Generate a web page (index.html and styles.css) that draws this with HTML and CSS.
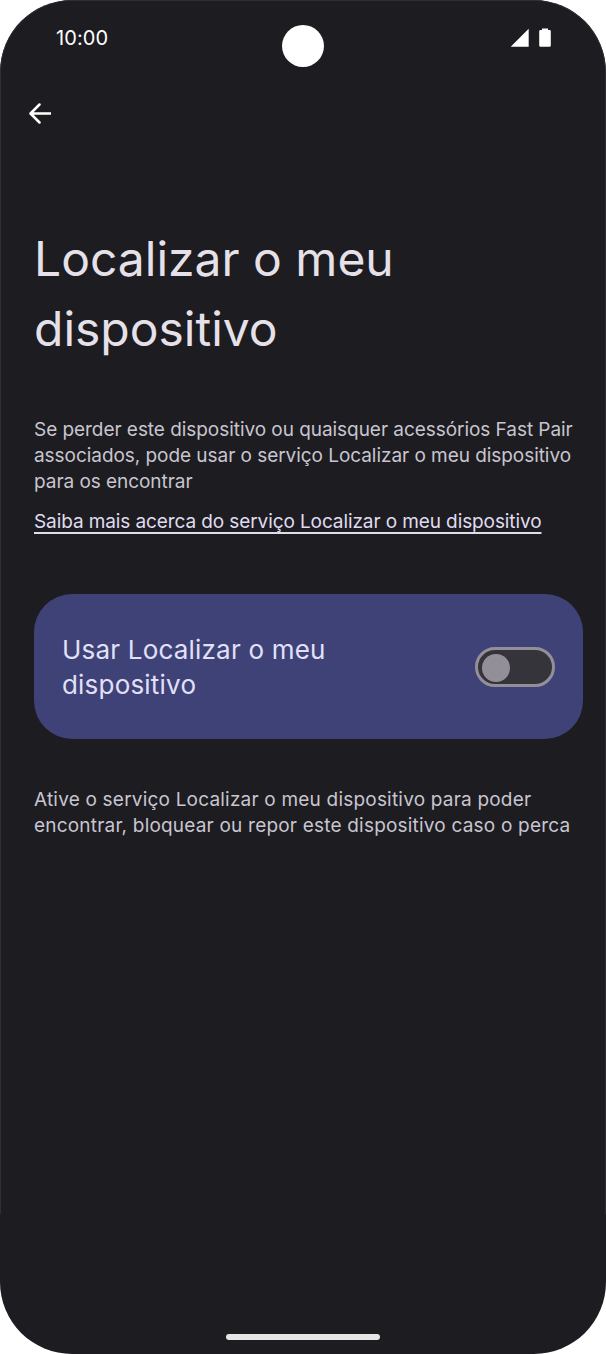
FILE: index.html
```html
<!DOCTYPE html>
<html lang="pt">
<head>
    <meta charset="UTF-8">
    <meta name="viewport" content="width=device-width, initial-scale=1.0">
    <title>Localizar o meu dispositivo</title>
    <link rel="stylesheet" href="styles.css">
</head>
<body>
    <div class="phone">
        <div class="edge"></div>
        <div class="camera"></div>

        <!-- barra de estado -->
        <div class="status-bar">
            <span class="clock">10:00</span>
            <div class="status-icons">
                <svg class="signal" width="19" height="19" viewBox="0 0 19 19">
                    <path d="M18.700 0.700V18.700H0.700Z" fill="#ffffff"/>
                </svg>
                <svg class="battery" width="12" height="19" viewBox="0 0 12 19">
                    <path d="M3 0.500H9V2H10.500Q11.800 2 11.800 3.300V17.400Q11.800 18.700 10.500 18.700H1.500Q0.200 18.700 0.200 17.400V3.300Q0.200 2 1.500 2H3Z" fill="#ffffff"/>
                </svg>
            </div>
        </div>

        <button class="back" type="button">
            <svg width="24" height="24" viewBox="0 0 24 24">
                <path d="M23.500 11.500H4M12.500 2.500L3.500 11.500L12.500 20.500" fill="none" stroke="#ffffff" stroke-width="2.500" stroke-linecap="round" stroke-linejoin="round"/>
            </svg>
        </button>

        <h1 class="title">Localizar o meu dispositivo</h1>

        <p class="text">Se perder este dispositivo ou quaisquer acessórios Fast Pair associados, pode usar o serviço Localizar o meu dispositivo para os encontrar</p>
        <a class="link" href="#">Saiba mais acerca do serviço Localizar o meu dispositivo</a>

        <!-- cartao principal -->
        <div class="main-switch">
            <span class="main-switch-label">Usar Localizar o meu dispositivo</span>
            <div class="toggle"><div class="toggle-thumb"></div></div>
        </div>

        <p class="text text-footer">Ative o serviço Localizar o meu dispositivo para poder encontrar, bloquear ou repor este dispositivo caso o perca</p>

        <div class="home-bar"></div>
    </div>
</body>
</html>
```

FILE: styles.css
```css
* {
    box-sizing: border-box;
}

body {
    margin: 0;
    background-color: white;
    font-family: Inter, "Noto Sans", sans-serif;
}

.phone {
    position: relative;
    display: flex;
    flex-direction: column;
    width: 606px;
    height: 1354px;
    padding: 0 23px 0 34px;
    background-color: #1c1c21;
    border-radius: 72px;
    overflow: hidden;
}

/* linha clara na borda do aparelho, para antes do fundo */
.edge {
    position: absolute;
    top: 0;
    left: 0;
    right: 0;
    height: 1214px;
    border: 1px solid #2f2f34;
    border-bottom: none;
    border-radius: 72px 72px 0 0;
}

.camera {
    position: absolute;
    top: 25px;
    left: 282px;
    width: 42px;
    height: 42px;
    background-color: white;
    border-radius: 50%;
}

.status-bar {
    display: flex;
    justify-content: space-between;
    align-items: center;
    height: 38px;
    margin-top: 18px;
    padding: 0 32px 0 22px;
}

.clock {
    margin-top: 1px;
    color: white;
    font-size: 20px;
    letter-spacing: 0.1px;
}

.status-icons {
    display: flex;
    align-items: center;
    gap: 10px;
}

.back {
    display: block;
    align-self: flex-start;
    width: 24px;
    height: 24px;
    margin: 46px 0 0 -7px;
    padding: 0;
    background: none;
    border: none;
}

.title {
    margin: 98px 0 0;
    max-width: 440px;
    color: #e6e1e9;
    font-size: 48px;
    font-weight: 400;
    line-height: 70px;
}

.text {
    margin: 53px 0 0;
    color: #c9c5d0;
    font-size: 19px;
    line-height: 26px;
    letter-spacing: -0.05px;
}

.link {
    align-self: flex-start;
    margin-top: 14px;
    color: #e0dcf0;
    font-size: 19px;
    line-height: 26px;
    letter-spacing: -0.1px;
    text-decoration: underline;
    text-decoration-thickness: 1.5px;
    text-underline-offset: 4px;
}

.main-switch {
    display: flex;
    justify-content: space-between;
    align-items: center;
    height: 145px;
    margin-top: 59px;
    padding: 0 28px 0 28px;
    background-color: #3e4276;
    border-radius: 38px;
}

.main-switch-label {
    max-width: 320px;
    color: #e2e0f9;
    font-size: 26px;
    line-height: 35px;
    letter-spacing: 0.2px;
}

.toggle {
    width: 80px;
    height: 40px;
    padding: 5px 0 0 5px;
    background-color: #36343b;
    border: 3px solid #938f99;
    border-radius: 20px;
}

.toggle-thumb {
    width: 28px;
    height: 28px;
    margin-top: -1px;
    margin-left: -1px;
    background-color: #938f99;
    border-radius: 50%;
}

.text-footer {
    margin-top: 48px;
    letter-spacing: 0.2px;
}

.home-bar {
    position: absolute;
    left: 226px;
    bottom: 14px;
    width: 154px;
    height: 6px;
    background-color: #e6e6e6;
    border-radius: 3px;
}
```
